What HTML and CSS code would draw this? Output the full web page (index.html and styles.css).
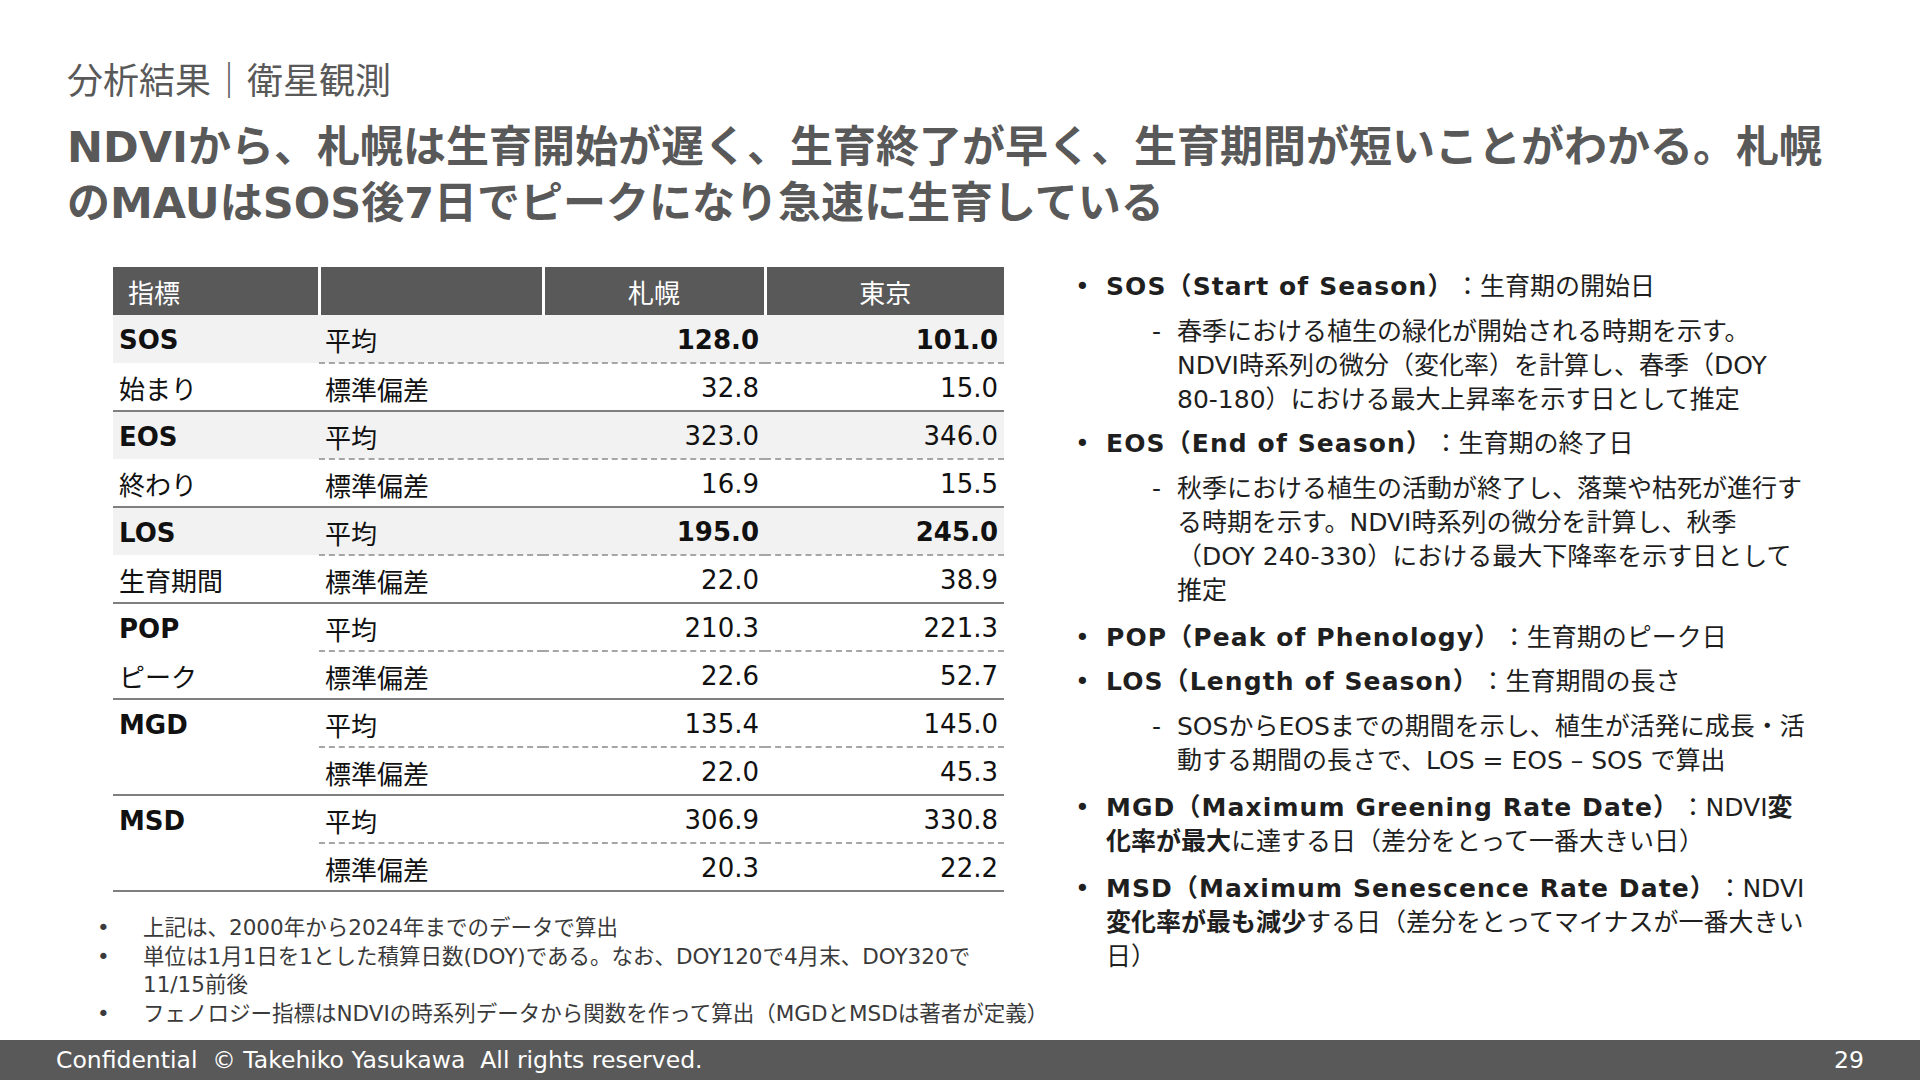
FILE: index.html
```html
<!DOCTYPE html>
<html lang="ja">
<head>
<meta charset="utf-8">
<title>分析結果｜衛星観測</title>
<link rel="stylesheet" href="styles.css">
</head>
<body>
<main class="main">
  <div class="subtitle">分析結果｜衛星観測</div>
  <h1 class="title">NDVIから、札幌は生育開始が遅く、生育終了が早く、生育期間が短いことがわかる。札幌<br>のMAUはSOS後7日でピークになり急速に生育している</h1>
  <div class="content">
    <div class="left">
      <table class="data">
        <colgroup>
          <col class="c1"><col class="c2"><col class="c3"><col class="c4">
        </colgroup>
        <thead>
          <tr><th class="h-left">指標</th><th></th><th>札幌</th><th>東京</th></tr>
        </thead>
        <tbody>
          <tr class="ra shade"><td class="k">SOS</td><td>平均</td><td class="n b">128.0</td><td class="n b">101.0</td></tr>
          <tr class="rb"><td>始まり</td><td>標準偏差</td><td class="n">32.8</td><td class="n">15.0</td></tr>
          <tr class="ra shade"><td class="k">EOS</td><td>平均</td><td class="n">323.0</td><td class="n">346.0</td></tr>
          <tr class="rb"><td>終わり</td><td>標準偏差</td><td class="n">16.9</td><td class="n">15.5</td></tr>
          <tr class="ra shade"><td class="k">LOS</td><td>平均</td><td class="n b">195.0</td><td class="n b">245.0</td></tr>
          <tr class="rb"><td>生育期間</td><td>標準偏差</td><td class="n">22.0</td><td class="n">38.9</td></tr>
          <tr class="ra"><td class="k">POP</td><td>平均</td><td class="n">210.3</td><td class="n">221.3</td></tr>
          <tr class="rb"><td>ピーク</td><td>標準偏差</td><td class="n">22.6</td><td class="n">52.7</td></tr>
          <tr class="ra"><td class="k">MGD</td><td>平均</td><td class="n">135.4</td><td class="n">145.0</td></tr>
          <tr class="rb"><td></td><td>標準偏差</td><td class="n">22.0</td><td class="n">45.3</td></tr>
          <tr class="ra"><td class="k">MSD</td><td>平均</td><td class="n">306.9</td><td class="n">330.8</td></tr>
          <tr class="rb"><td></td><td>標準偏差</td><td class="n">20.3</td><td class="n">22.2</td></tr>
        </tbody>
      </table>
      <ul class="notes">
        <li><span class="nb">•</span><span>上記は、2000年から2024年までのデータで算出</span></li>
        <li><span class="nb">•</span><span>単位は1月1日を1とした積算日数(DOY)である。なお、DOY120で4月末、DOY320で<br>11/15前後</span></li>
        <li><span class="nb">•</span><span>フェノロジー指標はNDVIの時系列データから関数を作って算出（MGDとMSDは著者が定義）</span></li>
      </ul>
    </div>
    <div class="right">
      <div class="item">
        <span class="dot">•</span>
        <div class="txt"><b class="lat">SOS（Start of Season）</b><span class="def">：生育期の開始日</span></div>
      </div>
      <div class="sub">
        <span class="dash">-</span>
        <div class="txt">春季における植生の緑化が開始される時期を示す。<br>NDVI時系列の微分（変化率）を計算し、春季（DOY<br>80-180）における最大上昇率を示す日として推定</div>
      </div>
      <div class="item">
        <span class="dot">•</span>
        <div class="txt"><b class="lat">EOS（End of Season）</b><span class="def">：生育期の終了日</span></div>
      </div>
      <div class="sub">
        <span class="dash">-</span>
        <div class="txt">秋季における植生の活動が終了し、落葉や枯死が進行す<br>る時期を示す。NDVI時系列の微分を計算し、秋季<br>（DOY 240-330）における最大下降率を示す日として<br>推定</div>
      </div>
      <div class="item wide">
        <span class="dot">•</span>
        <div class="txt"><b class="lat">POP（Peak of Phenology）</b><span class="def">：生育期のピーク日</span></div>
      </div>
      <div class="item">
        <span class="dot">•</span>
        <div class="txt"><b class="lat">LOS（Length of Season）</b><span class="def">：生育期間の長さ</span></div>
      </div>
      <div class="sub">
        <span class="dash">-</span>
        <div class="txt">SOSからEOSまでの期間を示し、植生が活発に成長・活<br>動する期間の長さで、LOS = EOS – SOS で算出</div>
      </div>
      <div class="item wide">
        <span class="dot">•</span>
        <div class="txt"><b class="lat">MGD（Maximum Greening Rate Date）</b><span class="def">：NDVI<b>変<br>化率が最大</b>に達する日（差分をとって一番大きい日）</span></div>
      </div>
      <div class="item wide">
        <span class="dot">•</span>
        <div class="txt"><b class="lat">MSD（Maximum Senescence Rate Date）</b><span class="def">：NDVI<br><b>変化率が最も減少</b>する日（差分をとってマイナスが一番大きい<br>日）</span></div>
      </div>
    </div>
  </div>
</main>
<footer class="footer">
  <span>Confidential&nbsp; © Takehiko Yasukawa&nbsp; All rights reserved.</span>
  <span>29</span>
</footer>
</body>
</html>
```
FILE: styles.css
```css
* {
  box-sizing: border-box;
  margin: 0;
  padding: 0;
}

html, body {
  width: 1920px;
  height: 1080px;
  overflow: hidden;
}

body {
  font-family: "DejaVu Sans", "Noto Sans CJK JP", sans-serif;
  background: #ffffff;
  color: #1a1a1a;
  display: flex;
  flex-direction: column;
}

.main {
  flex: 1;
  padding: 60px 0 0 67px;
}

.subtitle {
  font-size: 36px;
  line-height: 43px;
  color: #595959;
  font-weight: 400;
}

.title {
  margin-top: 16px;
  font-size: 43px;
  line-height: 56px;
  font-weight: 700;
  color: #595959;
  white-space: nowrap;
}

.content {
  display: flex;
  margin-top: 36px;
  padding-left: 35px;
}

.left {
  width: 902px;
  display: flex;
  flex-direction: column;
}

.data {
  margin-left: 11px;
  width: 891px;
  border-collapse: collapse;
  table-layout: fixed;
  font-size: 26px;
  color: #111111;
}

.c1 { width: 206px; }
.c2 { width: 224px; }
.c3 { width: 222px; }
.c4 { width: 239px; }

.data th {
  height: 48px;
  background: #595959;
  color: #ffffff;
  font-weight: 400;
  text-align: center;
  border-left: 3px solid #ffffff;
  padding: 0;
}

.data th.h-left {
  text-align: left;
  padding-left: 15px;
  border-left: none;
}

.data td {
  height: 48px;
  padding: 2px 6px 0;
  white-space: nowrap;
  vertical-align: middle;
}

.data td.k {
  font-weight: 700;
}

.data td.n {
  text-align: right;
}

.data td.b {
  font-weight: 700;
}

.data tr.shade td {
  background: #f2f2f2;
}

.data tr.ra td + td {
  border-bottom: 2px dashed #a6a6a6;
}

.data tr.rb td {
  border-bottom: 2px solid #7f7f7f;
}

.notes {
  list-style: none;
  margin-top: 22px;
  margin-left: -5px;
  font-size: 21.5px;
  line-height: 28.5px;
  color: #3a3a3a;
}

.notes li {
  display: flex;
  white-space: nowrap;
}

.nb {
  width: 46px;
  flex-shrink: 0;
}

.right {
  margin-left: 76px;
  padding-top: 3px;
  font-size: 25px;
  line-height: 34px;
  color: #1f1f1f;
}

.lat {
  letter-spacing: 1.1px;
}

.def {
  margin-left: 14px;
}

.item {
  display: flex;
  white-space: nowrap;
  margin-top: 10px;
}

.item:first-child {
  margin-top: 0;
}

.item.wide {
  margin-top: 13px;
}

.dot {
  width: 31px;
  margin-left: -5px;
  flex-shrink: 0;
}

.sub {
  display: flex;
  white-space: nowrap;
  margin-top: 11px;
  padding-left: 72px;
}

.dash {
  width: 25px;
  flex-shrink: 0;
}

.footer {
  height: 40px;
  background: #595959;
  color: #ffffff;
  display: flex;
  align-items: center;
  justify-content: space-between;
  padding: 0 56px;
  font-size: 23.5px;
}
```
